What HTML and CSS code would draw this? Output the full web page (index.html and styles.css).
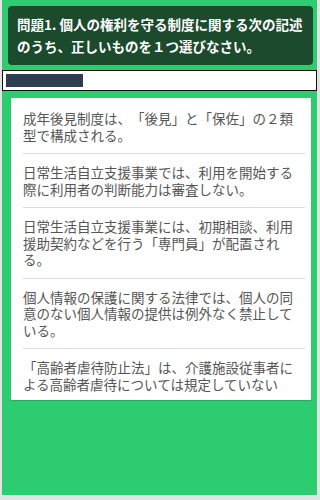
FILE: index.html
```html
<!DOCTYPE html>
<html lang="ja">
<head>
<meta charset="utf-8">
<title>問題1</title>
<link rel="stylesheet" href="styles.css">
</head>
<body>
<div class="page">
  <div class="question">問題1. 個人の権利を守る制度に関する次の記述のうち、正しいものを１つ選びなさい。</div>
  <div class="progress"><div class="fill" style="width:25%"></div></div>
  <div class="card">
    <div class="option">成年後見制度は、「後見」と「保佐」の２類型で構成される。</div>
    <div class="option">日常生活自立支援事業では、利用を開始する際に利用者の判断能力は審査しない。</div>
    <div class="option">日常生活自立支援事業には、初期相談、利用援助契約などを行う「専門員」が配置される。</div>
    <div class="option">個人情報の保護に関する法律では、個人の同意のない個人情報の提供は例外なく禁止している。</div>
    <div class="option">「高齢者虐待防止法」は、介護施設従事者による高齢者虐待については規定していない</div>
  </div>
</div>
</body>
</html>
```

FILE: styles.css
```css
html, body {
  margin: 0;
  padding: 0;
  background: #e3e3e3;
  font-family: "Noto Sans CJK JP", "Noto Sans", sans-serif;
  text-spacing-trim: space-all;
}

.page {
  margin-left: 2px;
  width: 315px;
  height: 495px;
  box-sizing: border-box;
  padding-top: 6px;
  background: #2ecc71;
}

.question {
  margin: 0 4px 0 6px;
  padding: 7px 10px 8px 9px;
  background: #1c4a2c;
  border-radius: 4px;
  color: #fff;
  font-weight: bold;
  font-size: 13.5px;
  line-height: 22px;
}

.progress {
  margin-top: 5px;
  border: 1px solid #111;
  background: #fff;
  padding: 3px;
}

.fill {
  height: 13px;
  background: #2c3e50;
}

.card {
  margin: 7px 6px 0 9px;
  padding-top: 2px;
  background: #fff;
  box-shadow: 0 1px 1px rgba(0, 0, 0, 0.15);
}

.option {
  margin: 0 6px 0 12px;
  padding: 10px 0;
  border-bottom: 1px solid #dcdcdc;
  color: #555;
  font-size: 13.5px;
  line-height: 16.5px;
}

.option:last-child {
  border-bottom: none;
  padding-bottom: 8px;
}
```
